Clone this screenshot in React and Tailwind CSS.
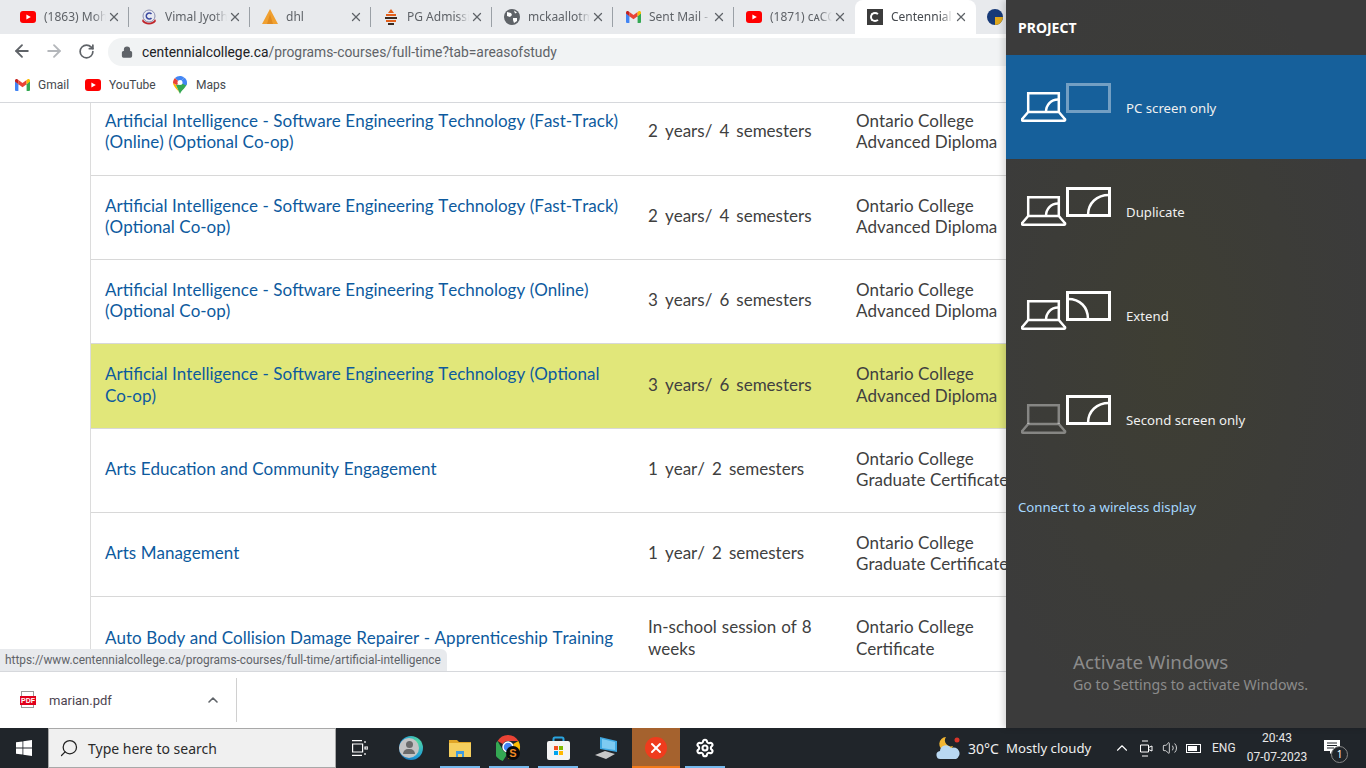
import React from 'react';
import { ArrowLeft, ArrowRight, RotateCw, Lock, X, ChevronUp, Search, Settings, Volume2 } from 'lucide-react';

const YouTube = ({ w = 16 }) => (
    <svg width={w} height={w * 0.75} viewBox="0 0 16 12">
        <rect width="16" height="12" rx="3" fill="#f00" />
        <path d="M6.4 3.4 10.8 6l-4.4 2.6z" fill="#fff" />
    </svg>
);

const Gmail = () => (
    <svg width="15" height="12" viewBox="0 0 15 12">
        <path d="M0 1.5V11a1 1 0 0 0 1 1h2.4V5.2z" fill="#4285f4" />
        <path d="M15 1.5V11a1 1 0 0 1-1 1h-2.4V5.2z" fill="#34a853" />
        <path d="M3.4 5.2 7.5 8.3l4.1-3.1V1L7.5 4.1 3.4 1z" fill="#ea4335" />
        <path d="M0 1.5C0 .3 1.4-.4 2.4.3l1 .7v4.2L0 2.6z" fill="#c5221f" />
        <path d="M15 1.5c0-1.2-1.4-1.9-2.4-1.2l-1 .7v4.2L15 2.6z" fill="#fbbc04" />
    </svg>
);

const Maps = () => (
    <svg width="14" height="18" viewBox="0 0 14 18">
        <path d="M7 18C6 14.5 0 11 0 6.5L3 9z" fill="#fbbc04" />
        <path d="M7 18c1-3.5 7-7 7-11.5L3 9z" fill="#34a853" />
        <path d="M2 2 7 6.5 3.5 9 0 7c0-2 .7-3.700 2-5z" fill="#ea4335" />
        <path d="M2 2c1.300-1.300 3-2 5-2 1.500 0 3 .5 4 1.500L7 6.500z" fill="#4285f4" />
        <path d="M11 1.500c2 1.300 3 3 3 5 0 1-.3 2-.8 3L7 6.500z" fill="#4285f4" />
        <circle cx="7" cy="6.500" r="2.500" fill="#fff" />
    </svg>
);

const VimalIcon = () => (
    <svg width="16" height="16" viewBox="0 0 16 16">
        <circle cx="8" cy="7" r="6" fill="#e8eaf2" stroke="#8a8fb0" strokeWidth="1" />
        <path d="M2 10c2 5 10 5 12 0l1 2c-2 4.500-12 4.500-14 0z" fill="#c0262c" />
        <path d="M10.500 5a3 3 0 1 0 0 4" fill="none" stroke="#3c4aa0" strokeWidth="1.500" />
    </svg>
);

const DhlIcon = () => (
    <svg width="16" height="16" viewBox="0 0 16 16">
        <path d="M8 0 16 15H0z" fill="#f0a030" />
        <path d="M8 5 11 15H5z" fill="#e08a20" />
    </svg>
);

const PgIcon = () => (
    <svg width="16" height="16" viewBox="0 0 16 16">
        <path d="M8 0 11 4H5z" fill="#e2601c" />
        <rect x="3" y="5" width="10" height="2" fill="#e2601c" />
        <rect x="2" y="8" width="12" height="2" fill="#3a2a20" />
        <rect x="3" y="11" width="10" height="2" fill="#e2601c" />
        <rect x="5" y="14" width="6" height="2" fill="#3a2a20" />
    </svg>
);

const WorldIcon = () => (
    <svg width="16" height="16" viewBox="0 0 16 16">
        <circle cx="8" cy="8" r="8" fill="#5f6368" />
        <path d="M3 3l4 1 1 2-2 2-3-1zM9 9l4 0 0 3-3 2-1-3zM10 1.500l3 2-2 1z" fill="#fff" />
    </svg>
);

const CentennialIcon = () => (
    <div className="w-4 h-4 bg-[#3c3c3c] flex items-center justify-center">
        <div className="w-[10px] h-[10px] rounded-full border-2 border-white border-r-transparent" />
    </div>
);

const tabs = [
    { icon: <YouTube />, title: '(1863) Mohit' },
    { icon: <VimalIcon />, title: 'Vimal Jyothi' },
    { icon: <DhlIcon />, title: 'dhl' },
    { icon: <PgIcon />, title: 'PG Admission' },
    { icon: <WorldIcon />, title: 'mckaallotment' },
    { icon: <Gmail />, title: 'Sent Mail - ' },
    { icon: <YouTube />, title: '(1871) cᴀCC' },
    { icon: <CentennialIcon />, title: 'Centennial', active: true },
];

function Tab({ icon, title, active, last }) {
    return (
        <div className={`relative w-[121px] h-[34px] shrink-0 flex items-center pl-3 pr-2 ${active ? 'bg-white rounded-t-lg' : ''}`}>
            <div className="w-4 h-4 shrink-0 flex items-center justify-center">{icon}</div>
            <span className={`ml-2 w-[62px] whitespace-nowrap overflow-hidden text-[12px] [mask-image:linear-gradient(to_right,black_80%,transparent)] ${active ? 'text-[#45494e]' : 'text-[#5f6368]'}`}>{title}</span>
            <X size={14} strokeWidth={2.2} className="ml-auto text-[#5f6368]" />
            {!last && !active && <div className="absolute right-0 top-[7px] w-px h-5 bg-[#9aa0a6]" />}
        </div>
    );
}

function ChromeBar() {
    return (
        <div className="shrink-0">
            <div className="h-[34px] bg-[#e8eaed] flex pl-2 overflow-hidden">
                {tabs.map((t, i) => (
                    <Tab key={i} {...t} last={i === 6} />
                ))}
                <div className="ml-[3px] pl-2 flex items-center">
                    <div className="w-4 h-4 rounded-full bg-[#173a78] overflow-hidden flex items-end justify-end">
                        <div className="w-2 h-2 bg-[#e0a81c]" />
                    </div>
                </div>
            </div>
            <div className="h-[34px] bg-white flex items-center">
                <ArrowLeft size={20} strokeWidth={2.2} className="ml-[12px] text-[#5f6368]" />
                <ArrowRight size={20} strokeWidth={2.2} className="ml-[12px] text-[#b4b7bb]" />
                <RotateCw size={17} strokeWidth={2.4} className="ml-[14px] text-[#5f6368]" />
                <div className="ml-[13px] mt-[2px] h-[28px] w-[1240px] shrink-0 rounded-full bg-[#f1f3f4] flex items-center pl-[13px]">
                    <Lock size={12} fill="#5f6368" strokeWidth={2.5} className="text-[#5f6368]" />
                    <span className="ml-[9px] font-['Roboto'] text-[13.850px] text-[#202124]">
                        centennialcollege.ca<span className="text-[#5f6368]">/programs-courses/full-time?tab=areasofstudy</span>
                    </span>
                </div>
            </div>
            <div className="h-[35px] bg-white border-b border-[#d6d8dc] flex items-center font-['Roboto'] text-[12px] text-[#45494e]">
                <div className="ml-[15px] flex items-center"><Gmail /></div>
                <span className="ml-[8px] w-[31px]">Gmail</span>
                <div className="ml-[16px] flex items-center"><YouTube /></div>
                <span className="ml-[8px] w-[47px]">YouTube</span>
                <div className="ml-[17px] flex items-center"><Maps /></div>
                <span className="ml-[9px]">Maps</span>
            </div>
        </div>
    );
}

const rows = [
    { name: ['Artificial Intelligence - Software Engineering Technology (Fast-Track)', '(Online) (Optional Co-op)'], len: ['2 years/ 4 semesters'], cred: ['Ontario College', 'Advanced Diploma'], h: 'h-[86px]' },
    { name: ['Artificial Intelligence - Software Engineering Technology (Fast-Track)', '(Optional Co-op)'], len: ['2 years/ 4 semesters'], cred: ['Ontario College', 'Advanced Diploma'], h: 'h-[84px]' },
    { name: ['Artificial Intelligence - Software Engineering Technology (Online)', '(Optional Co-op)'], len: ['3 years/ 6 semesters'], cred: ['Ontario College', 'Advanced Diploma'], h: 'h-[84px]' },
    { name: ['Artificial Intelligence - Software Engineering Technology (Optional', 'Co-op)'], len: ['3 years/ 6 semesters'], cred: ['Ontario College', 'Advanced Diploma'], h: 'h-[85px]', hi: true },
    { name: ['Arts Education and Community Engagement'], len: ['1 year/ 2 semesters'], cred: ['Ontario College', 'Graduate Certificate'], h: 'h-[84px]' },
    { name: ['Arts Management'], len: ['1 year/ 2 semesters'], cred: ['Ontario College', 'Graduate Certificate'], h: 'h-[84px]' },
    { name: ['Auto Body and Collision Damage Repairer - Apprenticeship Training'], len: ['In-school session of 8', 'weeks'], cred: ['Ontario College', 'Certificate'], h: 'h-[85px]' },
];

const lines = (arr) => arr.map((l, i) => <div key={i} className="whitespace-nowrap">{l}</div>);

function Table() {
    return (
        <div className="relative flex-1 min-h-0 overflow-hidden bg-white">
            <div className="ml-[90px] w-[1400px] mt-[-13px] border-l border-[#dcdcdc] font-['Lato'] [font-kerning:none] text-[17px] leading-[21.500px]">
                {rows.map((r, i) => (
                    <div key={i} className={`${r.h} pb-[3px] border-b border-[#d8d8d8] grid grid-cols-[557px_208px_1fr] items-center ${r.hi ? 'bg-[#e1e77a]' : ''}`}>
                        <div className="pl-[14px] text-[#0d5a9e] [word-spacing:0.2px]">{lines(r.name)}</div>
                        <div className={`text-[#404040] ${r.len.length === 1 ? '[word-spacing:2.700px]' : '[word-spacing:0.700px]'}`}>{lines(r.len)}</div>
                        <div className="text-[#404040]">{lines(r.cred)}</div>
                    </div>
                ))}
            </div>
            <div className="absolute left-0 bottom-0 h-[22px] w-[447px] bg-[#e8eaed] rounded-tr-md flex items-center pl-[5px] pt-[1px] font-['Roboto'] text-[11.870px] text-[#5f6368] whitespace-nowrap">
                https://www.centennialcollege.ca/programs-courses/full-time/artificial-intelligence
            </div>
        </div>
    );
}

function DownloadBar() {
    return (
        <div className="h-[57px] shrink-0 bg-white border-t border-[#d6d8dc] flex items-center">
            <div className="ml-5 w-4 h-4 relative">
                <div className="absolute left-[1px] top-[-1px] w-[13px] h-[17px] border border-[#9a9a9a] bg-white" />
                <div className="absolute left-0 top-[4px] w-4 h-[9px] bg-[#e0001b] text-white text-[7px] leading-[9px] font-bold text-center font-['Liberation_Sans']">PDF</div>
            </div>
            <span className="ml-[13px] w-[62px] mt-[1px] font-['Roboto'] text-[13px] text-[#4d4450]">marian.pdf</span>
            <ChevronUp size={16} strokeWidth={2.4} className="ml-[94px] text-[#5f6368]" />
            <div className="ml-[15px] w-px h-[44px] bg-[#d0d0d0]" />
        </div>
    );
}

function ProjectIcon({ arc, dimLaptop, dimMonitor }) {
    const mon = dimMonitor ? 'rgba(255,255,255,0.4)' : '#fff';
    const lap = dimLaptop ? 'rgba(255,255,255,0.38)' : '#fff';
    return (
        <svg width="90" height="40" viewBox="0 0 90 40" fill="none" className="shrink-0">
            <path d="M7.200 29V10.200H37.800V29" stroke={lap} strokeWidth="2.500" />
            <path d="M7.200 29H37.800L43.800 36a1 1 0 0 1-.8 1.700H2a1 1 0 0 1-.8-1.700z" stroke={lap} strokeWidth="2.500" strokeLinejoin="round" />
            {!dimLaptop && <path d="M25 29c0-7 5-12.500 12-12.500" stroke={lap} strokeWidth="2.500" />}
            <rect x="46.500" y="1.500" width="42" height="27" stroke={mon} strokeWidth="3" />
            {arc === 'right' && <path d="M67 28c0-12 9-20 21-20" stroke="#fff" strokeWidth="2.500" />}
            {arc === 'left' && <path d="M47 8c12 0 20 8 20 20" stroke="#fff" strokeWidth="2.500" />}
        </svg>
    );
}

const modes = [
    { label: 'PC screen only', active: true, dimMonitor: true },
    { label: 'Duplicate', arc: 'right' },
    { label: 'Extend', arc: 'left' },
    { label: 'Second screen only', arc: 'right', dimLaptop: true },
];

function ProjectPanel() {
    return (
        <div className="absolute right-0 top-0 w-[360px] h-[728px] bg-[radial-gradient(ellipse_at_45%_48%,#3e3e33_0%,#3c3c38_45%,#3b3b3b_75%)] shadow-[-3px_0_6px_rgba(0,0,0,0.15)] font-['Noto_Sans'] text-white">
            <div className="h-[55px] pl-3 pt-[18px] text-[14px] font-bold leading-5">PROJECT</div>
            {modes.map((m) => (
                <div key={m.label} className={`h-[104px] pl-[15px] pt-[28px] flex items-start ${m.active ? 'bg-[#16609b]' : ''}`}>
                    <ProjectIcon arc={m.arc} dimLaptop={m.dimLaptop} dimMonitor={m.dimMonitor} />
                    <span className="ml-[15px] mt-[15px] text-[13.200px] leading-5 text-[#f0f0f0]">{m.label}</span>
                </div>
            ))}
            <div className="pl-3 mt-[26px] text-[13.200px] leading-5 text-[#a6d8ff]">Connect to a wireless display</div>
            <div className="absolute left-[67px] top-[650px] text-[#8b8b8b]">
                <div className="text-[18.800px] leading-6">Activate Windows</div>
                <div className="mt-[1px] text-[14.200px] leading-5">Go to Settings to activate Windows.</div>
            </div>
        </div>
    );
}

const Edge = () => (
    <div className="relative w-6 h-6 rounded-full bg-[radial-gradient(circle_at_75%_25%,#52d9a0,#1f9bd8_60%,#155a9c)]">
        <div className="absolute left-0 top-[2px] w-5 h-5 rounded-full bg-[#c4c4c4] flex flex-col items-center pt-[3px]">
            <div className="w-[7px] h-[7px] rounded-full bg-[#6b6b6b]" />
            <div className="mt-[1px] w-3 h-[5px] rounded-t-full bg-[#6b6b6b]" />
        </div>
    </div>
);

const Folder = () => (
    <svg width="22" height="18" viewBox="0 0 22 18">
        <path d="M0 1h8l2 2h12v2H0z" fill="#e0a526" />
        <rect y="4" width="22" height="14" fill="#f5cf5e" />
        <path d="M7 18v-6h8v6h-2v-3H9v3z" fill="#3f9be0" />
    </svg>
);

const ChromeApp = () => (
    <svg width="27" height="27" viewBox="0 0 27 27">
        <path d="M12 0a12 12 0 0 1 10.400 6H12a6 6 0 0 0-5.200 3L1.600 6A12 12 0 0 1 12 0z" fill="#ea4335" />
        <path d="M1.600 6 6.800 15a6 6 0 0 0 5.200 3l-5.200 8A12 12 0 0 1 1.600 6z" fill="#34a853" />
        <path d="M22.400 6A12 12 0 0 1 12 24l5.200-9a6 6 0 0 0 0-6z" fill="#fbbc04" />
        <circle cx="12" cy="12" r="5" fill="#4285f4" stroke="#fff" strokeWidth="1.500" />
        <circle cx="17" cy="18" r="7" fill="#0a0a0a" />
        <text x="17" y="22" textAnchor="middle" fontSize="11" fontWeight="700" fill="#f08a24" fontFamily="Liberation Sans">S</text>
    </svg>
);

const Store = () => (
    <svg width="23" height="24" viewBox="0 0 23 24">
        <path d="M6.500 7V3a1.500 1.500 0 0 1 1.500-1.500h7A1.500 1.500 0 0 1 16.500 3v4" stroke="#2aa5e0" strokeWidth="2" fill="none" />
        <rect y="5" width="23" height="19" rx="2" fill="#f4f4f4" />
        <rect x="7" y="10" width="4" height="4" fill="#f25022" />
        <rect x="12" y="10" width="4" height="4" fill="#7fba00" />
        <rect x="7" y="15" width="4" height="4" fill="#00a4ef" />
        <rect x="12" y="15" width="4" height="4" fill="#ffb900" />
    </svg>
);

const LaptopApp = () => (
    <svg width="24" height="22" viewBox="0 0 24 22">
        <path d="M5 0l17 4v11L5 12z" fill="#3fa7e0" />
        <path d="M7 2l13 3v8L7 11z" fill="#7ecbf2" />
        <path d="M0 18l10-4 10 3-9 5z" fill="#c8c8c8" />
    </svg>
);

function AppSlot({ children, on, hot, w = 'w-10', ml = 'ml-[9px]' }) {
    return (
        <div className={`${w} ${ml} h-10 shrink-0 relative flex items-center justify-center ${hot ? 'bg-[#a5622e]' : ''}`}>
            {children}
            {on && <div className={`absolute left-0 right-0 bottom-0 h-[2px] ${hot ? 'bg-[#f27a1a]' : 'bg-[#76b9ed]'}`} />}
        </div>
    );
}

function Taskbar() {
    return (
        <div className="h-10 shrink-0 bg-[#20252a] flex items-center text-white relative font-['Noto_Sans']">
            <svg width="16" height="16" viewBox="0 0 16 16" className="ml-4 shrink-0">
                <path d="M0 2.300 6.500 1.400v6.200H0zM7.300 1.300 16 0v7.600H7.300zM0 8.400h6.500v6.200L0 13.700zM7.300 8.400H16V16l-8.700-1.300z" fill="#fff" />
            </svg>
            <div className="ml-4 w-[288px] h-10 shrink-0 bg-[#f0f0f0] border border-[#a8a8a8] flex items-center pl-[10px]">
                <Search size={20} strokeWidth={1.5} className="text-[#222] -scale-x-100" />
                <span className="ml-[9px] text-[14px] text-[#2b2b2b]">Type here to search</span>
            </div>
            <svg width="16" height="16" viewBox="0 0 16 16" fill="none" stroke="#fff" strokeWidth="1.200" className="ml-4 shrink-0">
                <path d="M0 .6h10M0 15.400h10M.6 4h10v8H.6zM13 1v2M13 7h3v2h-3zM13 13v2" />
            </svg>
            <AppSlot ml="ml-[23px]"><Edge /></AppSlot>
            <AppSlot on><Folder /></AppSlot>
            <AppSlot on><ChromeApp /></AppSlot>
            <AppSlot on><Store /></AppSlot>
            <AppSlot><LaptopApp /></AppSlot>
            <AppSlot on hot w="w-12" ml="ml-[5px]">
                <div className="w-[22px] h-[22px] rounded-full bg-[#ef3c1d] flex items-center justify-center">
                    <X size={16} strokeWidth={3} className="text-white" />
                </div>
            </AppSlot>
            <AppSlot on ml="ml-[5px]"><Settings size={20} strokeWidth={2.5} fill="#20252a" className="text-white" /></AppSlot>

            <svg width="24" height="24" viewBox="0 0 24 24" className="ml-[211px] shrink-0">
                <path d="M10 1a7 7 0 1 0 7 9 6 6 0 0 1-7-9z" fill="#f2b632" />
                <path d="M5 23a4 4 0 0 1-1-8 6 6 0 0 1 11-3 5 5 0 0 1 5 11z" fill="#b9d8f2" />
                <circle cx="21" cy="4" r="2.500" fill="#d9352a" />
            </svg>
            <span className="ml-2 w-[32px] text-[14px] text-[#f0f0f0] whitespace-nowrap">30°C</span>
            <span className="ml-[6px] mt-[1px] w-[86px] text-[13.200px] text-[#f0f0f0] whitespace-nowrap">Mostly cloudy</span>
            <ChevronUp size={18} strokeWidth={1.5} className="ml-[21px] text-white shrink-0" />
            <svg width="13" height="17" viewBox="0 0 13 17" fill="none" stroke="#fff" strokeWidth="1" className="ml-[9px] shrink-0">
                <path d="M2 1h6M2 16h6M.5 5h8v7h-8zM8.500 7.500 12 6v5L8.500 9.500" />
            </svg>
            <Volume2 size={16} strokeWidth={1.2} className="ml-[9px] text-white shrink-0" />
            <div className="ml-[8px] w-[15px] h-[9px] border border-white flex items-center p-[1px] shrink-0">
                <div className="w-[9px] h-[5px] bg-white" />
            </div>
            <span className="ml-[11px] w-[24px] text-[12px] text-[#e8e8e8] font-['Roboto']">ENG</span>
            <div className="ml-[10px] w-[62px] text-center font-['Roboto'] text-[12px] leading-[19px] text-[#e8e8e8] shrink-0">
                <div>20:43</div>
                <div className="whitespace-nowrap">07-07-2023</div>
            </div>
            <div className="relative ml-[16px] w-4 h-4 shrink-0">
                <svg width="16" height="15" viewBox="0 0 16 15">
                    <path d="M0 0h16v11h-7l-3 3v-3H0z" fill="#fff" />
                    <path d="M3 3h10M3 5.500h10M3 8h7" stroke="#20252a" strokeWidth="1" />
                </svg>
                <div className="absolute left-[7px] top-[6px] w-[17px] h-[17px] rounded-full border border-[#888] bg-[#20252a] text-[10px] leading-[15px] text-center">1</div>
            </div>
        </div>
    );
}

export default function App() {
    return (
        <div className="relative w-[1366px] h-[768px] overflow-hidden flex flex-col bg-white font-['Noto_Sans']">
            <ChromeBar />
            <Table />
            <DownloadBar />
            <Taskbar />
            <ProjectPanel />
        </div>
    );
}
